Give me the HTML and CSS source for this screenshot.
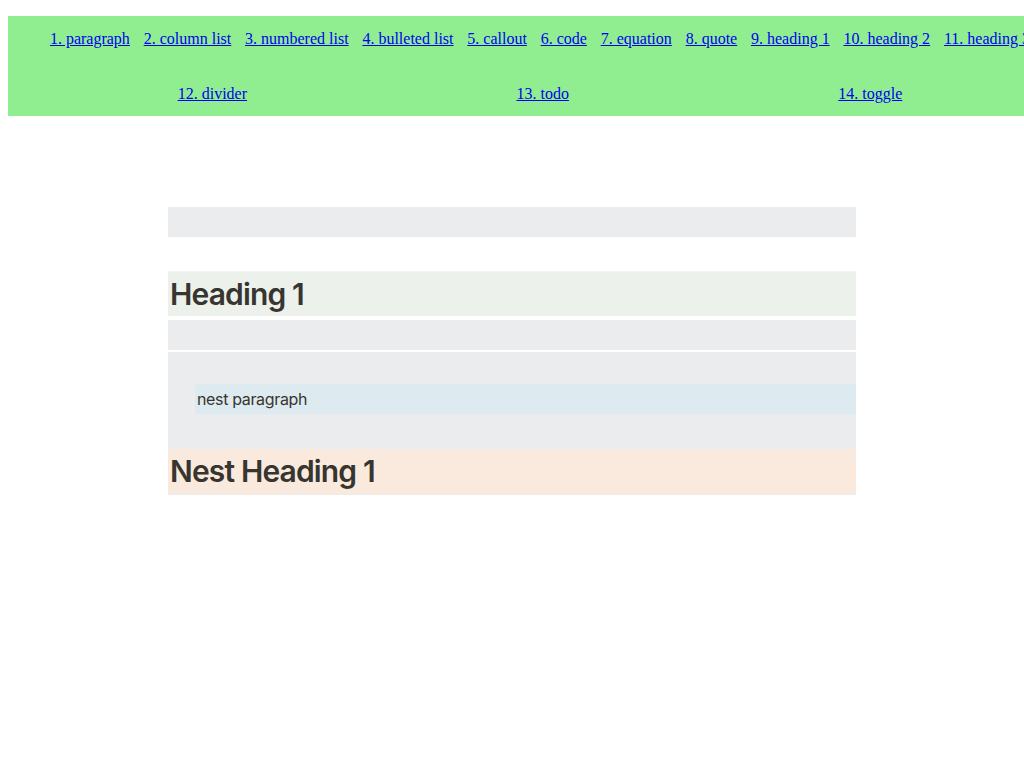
FILE: index.html
```html
<!DOCTYPE html>
<html lang="en">
<head>
<meta charset="utf-8">
<title>Blocks</title>
<link rel="stylesheet" href="styles.css">
</head>
<body>
<ul class="nav">
  <li><a href="#paragraph">1. paragraph</a></li>
  <li><a href="#column-list">2. column list</a></li>
  <li><a href="#numbered-list">3. numbered list</a></li>
  <li><a href="#bulleted-list">4. bulleted list</a></li>
  <li><a href="#callout">5. callout</a></li>
  <li><a href="#code">6. code</a></li>
  <li><a href="#equation">7. equation</a></li>
  <li><a href="#quote">8. quote</a></li>
  <li><a href="#heading-1">9. heading 1</a></li>
  <li><a href="#heading-2">10. heading 2</a></li>
  <li><a href="#heading-3">11. heading 3</a></li>
  <li><a href="#divider">12. divider</a></li>
  <li><a href="#todo">13. todo</a></li>
  <li><a href="#toggle">14. toggle</a></li>
</ul>

<main class="page">
  <div class="block para bg-gray empty">&nbsp;</div>
  <h1 class="block heading bg-green">Heading 1</h1>
  <div class="block para bg-gray empty">&nbsp;</div>
  <div class="group bg-gray">
    <div class="children">
      <div class="block para bg-blue">nest paragraph</div>
    </div>
    <h1 class="block heading nest bg-orange">Nest Heading 1</h1>
  </div>
</main>
</body>
</html>
```

FILE: styles.css
```css
html {
  overflow-x: hidden;
}

body {
  margin: 0;
  padding: 16px 8px 8px;
  font-family: "Liberation Serif", "Times New Roman", serif;
  background: #ffffff;
}

.nav {
  box-sizing: border-box;
  width: 1034px;
  height: 100px;
  margin: 0;
  padding: 14px 0 0 40px;
  list-style: none;
  background: #90ee90;
  display: flex;
  flex-wrap: wrap;
  justify-content: space-around;
  align-content: flex-start;
  row-gap: 37px;
  font-size: 16px;
}

.nav li {
  margin-right: 10px;
  line-height: normal;
}

.nav a {
  color: #0000ee;
  text-decoration: underline;
}

.page {
  max-width: 688px;
  margin: 91px auto 0;
  font-family: Inter, "Noto Sans", "Liberation Sans", sans-serif;
  color: #37352f;
}

.block {
  box-sizing: border-box;
  margin: 0;
}

.para {
  padding: 3px 2px;
  font-size: 16px;
  line-height: 24px;
  letter-spacing: -0.35px;
}

.heading {
  margin-top: 35px;
  margin-bottom: 4px;
  padding: 3px 2px 2px;
  font-size: 30px;
  line-height: 39px;
  font-weight: 600;
  letter-spacing: -0.85px;
  box-shadow: 0 -1px 0 #f3f4f2;
}

.heading.nest {
  margin: 0;
  padding: 3px 2px;
  box-shadow: none;
}

.empty + .group {
  margin-top: 2px;
}

.group {
  padding: 32px 0 1px;
}

.children {
  margin: 0 0 35px 27px;
}

.bg-gray { background: #ebeced; }
.bg-green { background: #edf1eb; }
.bg-blue { background: #ddeaf0; }
.bg-orange { background: #faeadd; }
```
